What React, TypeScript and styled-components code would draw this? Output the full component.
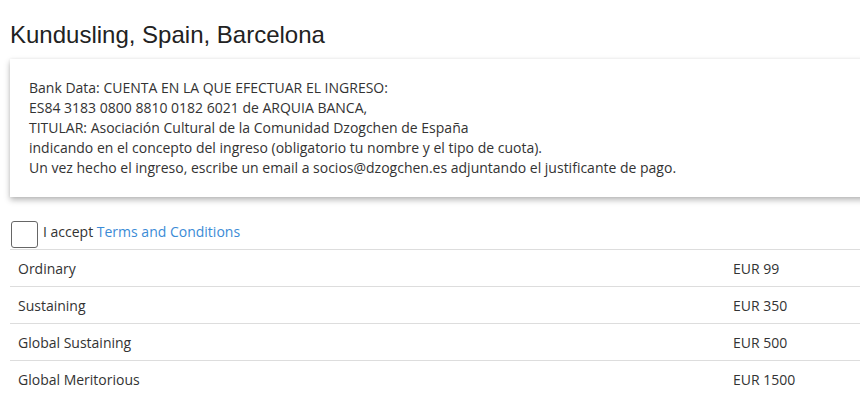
import React from 'react';
import styled, { createGlobalStyle } from 'styled-components';

const GlobalStyle = createGlobalStyle`
  html, body {
    margin: 0;
    padding: 0;
    background: #fff;
  }
  body {
    font-family: 'Open Sans', sans-serif;
    color: #333;
  }
`;

const Viewport = styled.div`
  width: 100%;
  overflow: hidden;
`;

const Page = styled.div`
  margin-right: -30px;
  padding: 0 0 20px 10px;
`;

const Title = styled.h2`
  font-family: 'Liberation Sans', Arial, sans-serif;
  font-size: 24px;
  font-weight: 400;
  color: #222;
  margin: 0;
  padding-top: 21px;
  line-height: 28px;
`;

const InfoCard = styled.div`
  margin-top: 10px;
  background: #fff;
  box-shadow: 0 3px 6px rgba(0, 0, 0, 0.28), 0 0 3px rgba(0, 0, 0, 0.06);
  padding: 19px 19px 19px;
  font-size: 14px;
  line-height: 20px;
  color: #333;
`;

const AcceptRow = styled.label`
  display: flex;
  align-items: flex-start;
  gap: 5px;
  margin-top: 24px;
  font-size: 14px;
  line-height: 20px;
  color: #333;
`;

const Box = styled.span`
  display: inline-block;
  flex: none;
  width: 25px;
  height: 25px;
  margin-left: 1px;
  border: 1px solid #666;
  border-radius: 3px;
  background: #fff;
`;

const AcceptText = styled.span`
  padding-top: 1px;
`;

const TermsLink = styled.a`
  color: #3b8bd6;
  text-decoration: none;
`;

const Table = styled.div`
  margin-top: 1px;
  border-top: 1px solid #ddd;
`;

const Row = styled.div`
  display: grid;
  grid-template-columns: 715px 1fr;
  height: 36px;
  align-items: center;
  border-bottom: 1px solid #ddd;
  font-size: 14px;
  color: #333;

  &:last-child {
    border-bottom: none;
  }
`;

const Cell = styled.div`
  padding: 0 8px;
`;

interface Fee {
  name: string;
  price: string;
}

const fees: Fee[] = [
  { name: 'Ordinary', price: 'EUR 99' },
  { name: 'Sustaining', price: 'EUR 350' },
  { name: 'Global Sustaining', price: 'EUR 500' },
  { name: 'Global Meritorious', price: 'EUR 1500' },
];

export default function App() {
  return (
    <>
      <GlobalStyle />
      <Viewport>
        <Page>
          <Title>Kundusling, Spain, Barcelona</Title>
          <InfoCard>
            Bank Data: CUENTA EN LA QUE EFECTUAR EL INGRESO:<br />
            ES84 3183 0800 8810 0182 6021 de ARQUIA BANCA,<br />
            TITULAR: Asociación Cultural de la Comunidad Dzogchen de España<br />
            indicando en el concepto del ingreso (obligatorio tu nombre y el tipo de cuota).<br />
            Un vez hecho el ingreso, escribe un email a socios@dzogchen.es adjuntando el justificante de pago.
          </InfoCard>
          <AcceptRow>
            <Box />
            <AcceptText>
              I accept <TermsLink href="#">Terms and Conditions</TermsLink>
            </AcceptText>
          </AcceptRow>
          <Table>
            {fees.map(fee => (
              <Row key={fee.name}>
                <Cell>{fee.name}</Cell>
                <Cell>{fee.price}</Cell>
              </Row>
            ))}
          </Table>
        </Page>
      </Viewport>
    </>
  );
}
